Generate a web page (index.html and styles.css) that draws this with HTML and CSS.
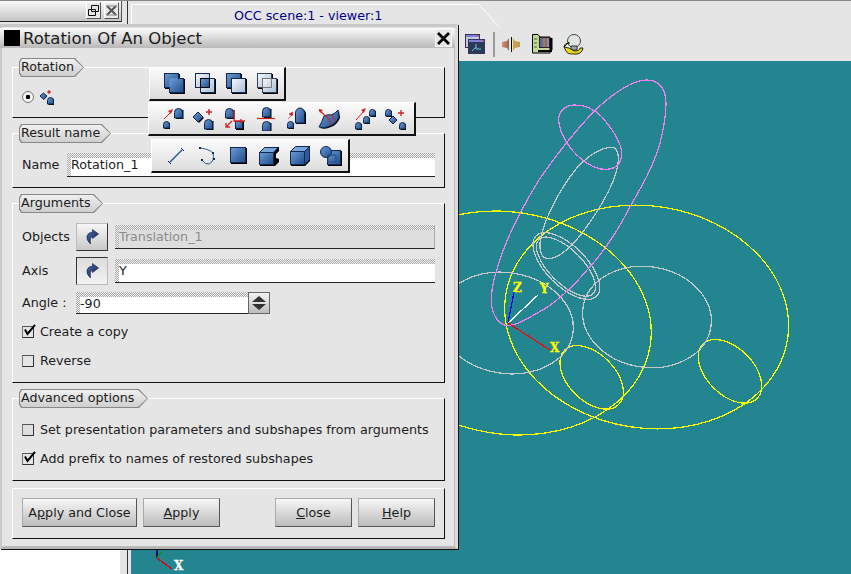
FILE: index.html
```html
<!DOCTYPE html>
<html lang="en">
<head>
  <meta charset="UTF-8" />
  <title>Rotation Of An Object</title>
  <link rel="stylesheet" href="styles.css">
</head>
<body>

  <svg class="defs" width="0" height="0">
    <defs>
      <linearGradient id="bl" x1="0" y1="0" x2="1" y2="1">
        <stop offset="0" stop-color="#6f9cd4"/>
        <stop offset="1" stop-color="#1d4c8c"/>
      </linearGradient>
      <linearGradient id="pl" x1="0" y1="0" x2="1" y2="1">
        <stop offset="0" stop-color="#f6f9fe"/>
        <stop offset="1" stop-color="#a8bad2"/>
      </linearGradient>
      <linearGradient id="arrow" x1="0" y1="0" x2="1" y2="1">
        <stop offset="0" stop-color="#4f6fb5"/>
        <stop offset="1" stop-color="#0c1c44"/>
      </linearGradient>
      <linearGradient id="splitl" x1="0" y1="0" x2="1" y2="0">
        <stop offset="0" stop-color="#e08a70"/>
        <stop offset="1" stop-color="#8a6a50"/>
      </linearGradient>
      <linearGradient id="splitr" x1="0" y1="0" x2="1" y2="0">
        <stop offset="0" stop-color="#e0a040"/>
        <stop offset="1" stop-color="#a8a060"/>
      </linearGradient>
      <g id="dome">
        <path d="M2 2h7.500v9H2z" fill="#000"/>
        <path d="M.5 10V4.500Q.5 .5 4.500 .5T8.500 4.500V10Z" fill="url(#bl)" stroke="#0e2546"/>
      </g>
      <g id="smalldome">
        <path d="M1.500 2h5.500v6H1.500z" fill="#000"/>
        <path d="M.5 7V3.500Q.5 .5 3.500 .5T6.500 3.500V7Z" fill="url(#bl)" stroke="#0e2546"/>
      </g>
      <g id="turn">
        <path d="M6.500 .5L12.500 5L6.500 9.500V7Q3.500 8 4.500 15Q0 11 1 7Q2 3.500 6.500 3Z" fill="url(#arrow)" stroke="#0c1c44" stroke-width=".6"/>
      </g>
      <path id="tick" d="M3 5.500L5.500 10L13 .8" fill="none" stroke="#000" stroke-width="2"/>
    </defs>
  </svg>

  <div class="app">
    <div class="side">
      <div class="side-title">
        <span class="win-btn">
          <svg width="13" height="13" viewBox="0 0 13 13"><path d="M4.500 1.500h7v6h-7zM1.500 5.500h7v6h-7z" fill="#e5e5e5" stroke="#111"/></svg>
        </span>
        <span class="win-btn">
          <svg width="13" height="13" viewBox="0 0 13 13"><path d="M2 2L11 11M11 2L2 11" stroke="#555" stroke-width="2"/><path d="M1 2h11M1 11h11" stroke="#888"/></svg>
        </span>
      </div>
      <div class="side-rest"></div>
    </div>

    <div class="main">
      <div class="tabs">
        <div class="tab">OCC scene:1 - viewer:1</div>
        <svg class="tab-end" width="22" height="27" viewBox="0 0 22 27"><path d="M0 3.500H1L21 26" fill="none" stroke="#fff"/></svg>
      </div>

      <div class="toolbar">
        <svg class="tool-win" width="20" height="20" viewBox="0 0 20 20">
          <rect x=".5" y=".5" width="14" height="13" fill="#c5c5de" stroke="#34345c"/>
          <path d="M1 1h13v2H1z" fill="#8080d8"/>
          <rect x="3.500" y="5.500" width="16" height="14" fill="#2c3a58" stroke="#34345c"/>
          <path d="M4 6h15v2H4z" fill="#8080d8"/>
          <path d="M17 6h2v1h-2zM12 1h2v1h-2z" fill="#e04040"/>
          <path d="M7 17L11 13M11 10V15H16" stroke="#63c5d8" fill="none"/>
        </svg>
        <span class="tool-sep"></span>
        <svg class="tool-split" width="18" height="15" viewBox="0 0 18 15">
          <path d="M0 5L5 4L7 1V14L5 11L0 10Z" fill="url(#splitl)"/>
          <path d="M11 1L13 4L18 5V10L13 11L11 14Z" fill="url(#splitr)"/>
          <path d="M9.500 0V15" stroke="#000"/>
        </svg>
        <svg class="tool-chart" width="21" height="20" viewBox="0 0 21 20">
          <path d="M.5 .5H6L8 3H18V19H.5Z" fill="#c0d890" stroke="#000"/>
          <path d="M2 5h3M2 9h3M2 13h3M8 16v2M12 16v2" stroke="#4a6a20"/>
          <rect x="7" y="3" width="11" height="11" fill="#222"/>
          <path d="M8 4h3v9H8z" fill="#7a5aa0"/><path d="M11 4h2v9h-2z" fill="#5aa060"/><path d="M13 4h2v9h-2z" fill="#c05060"/><path d="M15 4h2v9h-2z" fill="#8090b0"/>
          <path d="M18 4h2.500v12H18zM6 16h14v2H6z" fill="#000"/>
        </svg>
        <svg class="tool-bulb" width="21" height="21" viewBox="0 0 21 21">
          <circle cx="11" cy="7" r="6.500" fill="#dfe6e2" stroke="#444"/>
          <path d="M8 12h6v4H8z" fill="#9aa" stroke="#333"/>
          <path d="M1 13Q2 8 6 10V8L1 13ZM1 13L3 17Q4 20 10 20Q19 21 20 14L17 14Q17 17 11 17L6 14Z" fill="#e8d820" stroke="#000" stroke-width=".8"/>
        </svg>
      </div>

      <div class="viewer">
        <svg class="scene" viewBox="131 61 720 513" width="720" height="513">
          <g transform="translate(460 70) scale(.33333)" fill="none" class="wires">
            <g stroke="#ffff00">
              <ellipse cx="141" cy="759" rx="435" ry="333" transform="rotate(9 141 759)"/>
              <ellipse cx="560" cy="741" rx="428" ry="333" transform="rotate(9 560 741)"/>
              <ellipse cx="395" cy="922" rx="115" ry="70" transform="rotate(45 395 922)"/>
              <ellipse cx="810" cy="904" rx="115" ry="70" transform="rotate(45 810 904)"/>
            </g>
            <g stroke="#c8c8c8">
              <ellipse cx="138" cy="759" rx="203" ry="151" transform="rotate(9 138 759)"/>
              <ellipse cx="561" cy="741" rx="194" ry="151" transform="rotate(9 561 741)"/>
              <ellipse cx="319" cy="588" rx="128" ry="60" transform="rotate(45 319 588)"/>
              <ellipse cx="318" cy="590" rx="115" ry="50" transform="rotate(45 318 590)"/>
              <path d="M455 232C470 232 476 250 475 270C473 310 450 360 420 410C395 450 365 495 335 525C310 550 285 566 265 566C245 566 238 545 240 520C245 470 280 400 310 350C335 310 365 275 390 258C415 240 435 232 455 232Z"/>
            </g>
            <g stroke="#ee82ee">
              <path d="M135 766C105 755 94 720 94 690C94 640 110 600 130 540C160 460 200 390 240 325C300 240 380 140 440 90C490 50 530 30 560 30C600 30 618 60 618 100C618 140 610 180 600 220C580 290 545 350 510 410C480 470 435 540 390 590C340 650 280 705 230 730C195 750 165 770 135 766Z"/>
              <path d="M345 105C315 105 295 125 296 150C297 190 330 240 365 268C390 288 415 300 440 298C470 296 485 280 485 250C485 215 455 175 425 140C400 115 375 105 345 105Z"/>
            </g>
          </g>
          <g class="wires">
            <path d="M508 323L514 292" stroke="#0000ff"/>
            <path d="M514 292L514 291" stroke="#c8c8c8" stroke-width="3"/>
            <path d="M508 323L538 295" stroke="#ffffff"/>
            <path d="M508 323L550 350" stroke="#ff0000"/>
            <path d="M157 558L157 550" stroke="#00007a"/>
            <path d="M157 558L162 551" stroke="#00a000"/>
            <path d="M157 558L172 569" stroke="#e00000" stroke-width="2"/>
          </g>
          <text class="axis" x="513" y="292">Z</text>
          <text class="axis" x="540" y="293">Y</text>
          <text class="axis" x="550" y="352">X</text>
          <text class="axis axis-white" x="174" y="570">X</text>
        </svg>
      </div>
    </div>
  </div>

  <div class="dialog">
    <div class="dlg-title">
      <span class="dlg-icon"></span>
      <span class="dlg-name">Rotation Of An Object</span>
      <span class="dlg-close">
        <svg width="13" height="13" viewBox="0 0 13 13"><path d="M1 1L12 12M12 1L1 12" stroke="#000" stroke-width="2.800"/></svg>
      </span>
    </div>

    <div class="dlg-body">
      <div class="group group-rotation">
        <div class="legend legend-rotation"><span>Rotation</span></div>
        <div class="row">
          <span class="radio"></span>
          <svg class="radio-icon" width="16" height="16" viewBox="0 0 16 16">
            <path d="M1 7L4.500 4L8 7L5 10.500Z" fill="url(#bl)" stroke="#0e2546"/>
            <use href="#smalldome" x="8" y="8"/>
            <path d="M10 1v4M8 3h4" stroke="#c00000"/>
          </svg>
        </div>
      </div>

      <div class="group group-name">
        <div class="legend legend-result"><span>Result name</span></div>
        <div class="row">
          <span class="lbl lbl-name">Name</span>
          <div class="field"><div class="field-in">Rotation_1</div></div>
        </div>
      </div>

      <div class="group group-args">
        <div class="legend legend-args"><span>Arguments</span></div>
        <div class="row row-pick">
          <span class="lbl lbl-arg">Objects</span>
          <span class="pick"><svg width="13" height="16" viewBox="0 0 13 16"><use href="#turn"/></svg></span>
          <div class="field field-off"><div class="field-in">Translation_1</div></div>
        </div>
        <div class="row row-pick row-axis">
          <span class="lbl lbl-arg">Axis</span>
          <span class="pick pick-down"><svg width="13" height="16" viewBox="0 0 13 16"><use href="#turn"/></svg></span>
          <div class="field"><div class="field-in">Y</div></div>
        </div>
        <div class="row row-angle">
          <span class="lbl lbl-arg">Angle :</span>
          <div class="field field-spin"><div class="field-in">-90</div></div>
          <span class="spin">
            <svg width="20" height="20" viewBox="0 0 20 20"><path d="M10 3L17 9H3ZM3 11H17L10 17Z" fill="#333"/><path d="M2 10H18" stroke="#e5e5e5"/></svg>
          </span>
        </div>
        <div class="row row-check row-check-first">
          <span class="check"><svg width="16" height="16" viewBox="0 0 16 16"><use href="#tick" y="0"/></svg></span>
          <span class="lbl">Create a copy</span>
        </div>
        <div class="row row-check">
          <span class="check"></span>
          <span class="lbl">Reverse</span>
        </div>
      </div>

      <div class="group group-adv">
        <div class="legend legend-adv"><span>Advanced options</span></div>
        <div class="row row-check row-check-adv">
          <span class="check check-off"></span>
          <span class="lbl">Set presentation parameters and subshapes from arguments</span>
        </div>
        <div class="row row-check">
          <span class="check"><svg width="16" height="16" viewBox="0 0 16 16"><use href="#tick"/></svg></span>
          <span class="lbl">Add prefix to names of restored subshapes</span>
        </div>
      </div>

      <div class="group group-btns">
        <button class="btn btn-wide">A<u>p</u>ply and Close</button>
        <button class="btn"><u>A</u>pply</button>
        <span class="spacer"></span>
        <button class="btn"><u>C</u>lose</button>
        <button class="btn"><u>H</u>elp</button>
      </div>
    </div>
  </div>

  <!-- floating toolbars sitting over the dialog -->
  <div class="float float-a">
    <span class="grip"></span>
    <svg class="ico" viewBox="0 0 24 24">
      <rect x="3" y="2" width="15" height="15" fill="#000"/><rect x="8" y="7" width="15" height="15" fill="#000"/>
      <rect x="2.500" y="1.500" width="14" height="14" fill="url(#bl)" stroke="#10294e"/>
      <rect x="7.500" y="6.500" width="14" height="14" fill="url(#bl)" stroke="#10294e"/>
      <path d="M7.500 15V6.500H16" stroke="#5d8cc8" fill="none"/>
    </svg>
    <svg class="ico" viewBox="0 0 24 24">
      <rect x="8" y="7" width="15" height="15" fill="#000"/>
      <rect x="2.500" y="1.500" width="14" height="14" fill="url(#pl)" stroke="#10294e"/>
      <rect x="7.500" y="6.500" width="14" height="14" fill="url(#pl)" stroke="#10294e"/>
      <rect x="7.500" y="6.500" width="9" height="9" fill="url(#bl)" stroke="#000"/>
    </svg>
    <svg class="ico" viewBox="0 0 24 24">
      <rect x="3" y="2" width="15" height="15" fill="#000"/><rect x="8" y="7" width="15" height="15" fill="#000"/>
      <rect x="2.500" y="1.500" width="14" height="14" fill="url(#bl)" stroke="#10294e"/>
      <rect x="7.500" y="6.500" width="14" height="14" fill="url(#pl)" stroke="#10294e"/>
    </svg>
    <svg class="ico" viewBox="0 0 24 24">
      <rect x="3" y="2" width="15" height="15" fill="#000"/><rect x="8" y="7" width="15" height="15" fill="#000"/>
      <rect x="2.500" y="1.500" width="14" height="14" fill="url(#pl)" stroke="#2f3f55"/>
      <rect x="7.500" y="6.500" width="14" height="14" fill="url(#pl)" stroke="#2f3f55"/>
      <path d="M7.500 15.500V6.500H16.500V15.500Z" fill="none" stroke="#777"/>
    </svg>
  </div>

  <div class="float float-b">
    <span class="grip"></span>
    <svg class="ico" viewBox="0 0 24 24">
      <use href="#smalldome" x="2" y="14"/><use href="#dome" x="13" y="1"/>
      <path d="M3 12L10 5" stroke="#d02020"/><path d="M12 2L7 4L10 7Z" fill="#d02020"/>
    </svg>
    <svg class="ico" viewBox="0 0 24 24">
      <path d="M2 11L7 6L12 11L7 16Z" fill="#000"/>
      <path d="M1 10L6 5L11 10L6 15Z" fill="url(#bl)" stroke="#0e2546"/>
      <use href="#dome" x="12" y="12"/>
      <path d="M17 2v6M14 5h6" stroke="#d02020" stroke-width="1.400"/>
    </svg>
    <svg class="ico" viewBox="0 0 24 24">
      <use href="#dome" x="2" y="1"/>
      <rect x="13" y="15" width="8" height="8" fill="#000"/>
      <rect x="12.500" y="14.500" width="7" height="7" fill="url(#bl)" stroke="#0e2546"/>
      <path d="M11 3V14H22M18 12v4M9 14L4 19M7 20H3V16" stroke="#d02020" fill="none" stroke-width="1.300"/>
    </svg>
    <svg class="ico" viewBox="0 0 24 24">
      <use href="#dome" x="8" y="0"/><use href="#dome" x="8" y="14"/>
      <path d="M3 11.500H21" stroke="#d02020" stroke-width="1.200"/>
    </svg>
    <svg class="ico" viewBox="0 0 24 24">
      <use href="#smalldome" x="2" y="14"/>
      <path d="M11 17V7a5 5 0 0 1 10 0v10z" fill="#000"/>
      <path d="M10.500 16V6a4.500 5 0 0 1 9 0v10z" fill="url(#bl)" stroke="#0e2546"/>
      <path d="M3 12L8 7M8 5L4 7L7 9Z" stroke="#d02020" fill="#d02020" stroke-width=".6"/>
    </svg>
    <svg class="ico" viewBox="0 0 24 24">
      <path d="M9 10Q13 8 16 9Q20 8 23 4L24 11Q21 18 15 20Q9 23 4 21Q7 16 9 10Z" fill="#000"/>
      <path d="M8 9Q12 7 15 8Q19 7 22 3L23 10Q20 17 14 19Q8 22 3 20Q6 15 8 9Z" fill="url(#bl)" stroke="#0e2546"/>
      <path d="M3 3L13 12L15 18M15 7L19 14" stroke="#d02020" fill="none" stroke-width="1.100"/>
      <path d="M3 2L7 3L4 6Z" fill="#d02020"/>
    </svg>
    <span class="float-sep"></span>
    <svg class="ico" viewBox="0 0 24 24">
      <use href="#smalldome" x="2" y="15"/><use href="#smalldome" x="10" y="9"/><use href="#smalldome" x="16" y="2"/>
      <path d="M3 13L11 4" stroke="#d02020"/><path d="M13 1L8 3L11 6Z" fill="#d02020"/>
    </svg>
    <svg class="ico" viewBox="0 0 24 24">
      <use href="#smalldome" x="1" y="2"/>
      <path d="M5 13L9 9L13 13L9 17Z" fill="url(#bl)" stroke="#0e2546"/>
      <use href="#smalldome" x="15" y="15"/>
      <path d="M17 3v6M14 6h6" stroke="#d02020" stroke-width="1.300"/>
    </svg>
  </div>

  <div class="float float-c">
    <span class="grip"></span>
    <svg class="ico" viewBox="0 0 24 24">
      <path d="M6 18L18 6" stroke="#2a5a9a" stroke-width="1.500"/>
      <path d="M4 17L7 20M17 4L20 7" stroke="#10294e"/>
    </svg>
    <svg class="ico" viewBox="0 0 24 24">
      <path d="M5 4Q14 5 18 9Q20 17 14 20Q10 21 7 16" fill="none" stroke="#2a5a9a"/>
      <path d="M4 3h2v2H4zM17 8h2v2h-2zM18 14h2v2h-2zM6 15h2v2H6z" fill="#10294e"/>
    </svg>
    <svg class="ico" viewBox="0 0 24 24">
      <rect x="5" y="4" width="16" height="16" fill="#000"/>
      <rect x="4.500" y="3.500" width="15" height="15" fill="url(#bl)" stroke="#10294e"/>
    </svg>
    <svg class="ico" viewBox="0 0 24 24">
      <path d="M2 9L8 3H22V7L19 10V14L22 15V18L18 22H3Z" fill="#000"/>
      <path d="M2.500 8.500H16.500V20.500H2.500Z" fill="url(#bl)" stroke="#10294e"/>
      <path d="M2.500 8.500L7.500 3.500H21L16.500 8.500Z" fill="#7ba6dc" stroke="#10294e"/>
    </svg>
    <svg class="ico" viewBox="0 0 24 24">
      <path d="M3 8L8 3H22V17L17 22H3Z" fill="#000"/>
      <path d="M2.500 7.500H16.500V20.500H2.500Z" fill="url(#bl)" stroke="#10294e"/>
      <path d="M2.500 7.500L7.500 2.500H21.500L16.500 7.500Z" fill="#7ba6dc" stroke="#10294e"/>
      <path d="M16.500 7.500L21.500 2.500V15.500L16.500 20.500Z" fill="#2a5a9a" stroke="#10294e"/>
    </svg>
    <svg class="ico" viewBox="0 0 24 24">
      <rect x="9" y="7" width="14" height="15" fill="#000"/>
      <rect x="8.500" y="6.500" width="13" height="14" fill="url(#bl)" stroke="#10294e"/>
      <circle cx="7" cy="8" r="5.500" fill="url(#bl)" stroke="#10294e"/>
      <path d="M9 11h8v7H9z" fill="none" stroke="#274a7d"/>
    </svg>
  </div>

</body>
</html>
```

FILE: styles.css
```css
* {
  box-sizing: border-box;
}
html, body {
  margin: 0;
  height: 100%;
  overflow: hidden;
}
body {
  position: relative;
  width: 851px;
  height: 574px;
  font-family: "DejaVu Sans", sans-serif;
  font-size: 12.7px;
  color: #1c1c1c;
  background: #e5e5e5;
}
.defs {
  position: absolute;
}

/* app behind the dialog */
.app {
  display: flex;
  height: 574px;
  border-top: 1px solid #888;
}
.side {
  width: 128px;
  display: flex;
  flex-direction: column;
  border-right: 1px solid #333;
}
.side-title {
  height: 21px;
  width: 122px;
  padding: 1px 2px 0 0;
  display: flex;
  justify-content: flex-end;
  gap: 3px;
  background: linear-gradient(#fafafa, #c4c4c4);
  border-bottom: 1px solid #222;
  border-right: 1px solid #555;
}
.win-btn {
  width: 15px;
  height: 17px;
  display: flex;
  align-items: center;
  justify-content: center;
  background: #e8e8e8;
  border: 1px solid;
  border-color: #fff #555 #555 #fff;
}
.side-rest {
  flex: 1;
  border-right: 7px solid #e5e5e5;
  background: #fff;
  margin-top: 2px;
}
.main {
  flex: 1;
  display: flex;
  flex-direction: column;
}
.tabs {
  height: 26px;
  padding-left: 3px;
  display: flex;
}
.tab {
  width: 347px;
  height: 26px;
  margin-top: 3px;
  padding-left: 102px;
  line-height: 22px;
  color: #000087;
  border-top: 1px solid #fff;
  border-left: 1px solid #fff;
}
.tab-end {
  flex: none;
}
.toolbar {
  height: 34px;
  padding-left: 337px;
  display: flex;
  align-items: center;
}
.tool-win {
  margin-right: 8px;
}
.tool-sep {
  width: 2px;
  height: 25px;
  margin-right: 7px;
  background: #999;
}
.tool-split {
  margin-right: 12px;
}
.tool-chart {
  margin-right: 10px;
}
.viewer {
  flex: 1;
  margin-left: 3px;
  background: #23858f;
  overflow: hidden;
}
.scene {
  display: block;
}
.wires * {
  vector-effect: non-scaling-stroke;
  shape-rendering: crispEdges;
  stroke-width: 1.25;
}
.axis {
  font-family: "DejaVu Serif", serif;
  font-weight: bold;
  font-size: 12px;
  fill: #ffff00;
  stroke: #ffff00;
  stroke-width: .3;
}
.axis-white {
  fill: #fff;
  stroke: #fff;
}

/* dialog window */
.dialog {
  position: absolute;
  left: 0;
  top: 24px;
  width: 458px;
  height: 525px;
  background: #e5e5e5;
  border: 3px solid #c9c9c9;
  border-left-width: 2px;
  border-right: 3px solid #dcdcdc;
  border-bottom: 2px solid #b5b5b5;
  box-shadow: inset -1px -1px 0 #bbb, 1px 1px 0 #111;
}
.dlg-title {
  height: 20px;
  margin: 1px 0 0 -2px;
  padding: 0 3px 0 4px;
  display: flex;
  align-items: center;
  background: linear-gradient(#fbfbfb, #b9b9b9);
}
.dlg-icon {
  width: 16px;
  height: 16px;
  background: #000;
}
.dlg-name {
  flex: 1;
  margin-left: 3px;
  font-size: 16.5px;
}
.dlg-close {
  width: 17px;
  height: 18px;
  display: flex;
  align-items: center;
  justify-content: center;
  background: #e5e5e5;
  border: 1px solid #f4f4f4;
}
.dlg-body {
  width: 433px;
  margin: 0 0 0 10px;
  display: flex;
  flex-direction: column;
}
.group {
  width: 433px;
  border: 1px solid;
  border-color: #fff #111 #111 #fff;
}
.group-rotation { margin-top: 19px; height: 51px; }
.group-name { margin-top: 15px; height: 55px; }
.group-args { margin-top: 15px; height: 180px; }
.group-adv { margin-top: 15px; height: 83px; }
.group-btns {
  margin-top: 7px;
  height: 51px;
  padding: 9px;
  display: flex;
  gap: 6px;
}
.legend {
  height: 19px;
  margin: -10px 0 0 6px;
  padding: 1px;
  background: #888;
  clip-path: polygon(2px 0, calc(100% - 9px) 0, 100% 50%, calc(100% - 9px) 100%, 2px 100%, 0 80%, 0 20%);
}
.legend span {
  display: block;
  height: 17px;
  padding-left: 1px;
  line-height: 16px;
  white-space: nowrap;
  background: linear-gradient(#f0f0f0, #cfcfcf);
  clip-path: polygon(2px 0, calc(100% - 9px) 0, 100% 50%, calc(100% - 9px) 100%, 2px 100%, 0 80%, 0 20%);
}
.legend-rotation { width: 65px; }
.legend-result { width: 92px; }
.legend-args { width: 84px; }
.legend-adv { width: 129px; }

.row {
  display: flex;
  align-items: center;
  padding-left: 9px;
  padding-right: 9px;
}
.group-rotation .row { margin-top: 12px; }
.group-name .row { margin-top: 10px; height: 24px; }
.lbl {
  margin-top: -2px;
}
.lbl-name { width: 45px; }
.lbl-arg { width: 54px; }
.group-args .legend { margin-bottom: 10px; }
.row-pick { height: 28px; }
.row-axis { margin-top: 6px; }
.row-angle { height: 22px; margin-top: 7px; }
.row-check { height: 18px; margin-top: 11px; gap: 5px; }
.row-check-first { margin-top: 9px; }
.row-check-adv { margin-top: 13px; }
.row-check .lbl { margin-left: 1px; }

.radio {
  width: 12px;
  height: 12px;
  border-radius: 50%;
  border: 1px solid #777;
  background: radial-gradient(#000 0 2px, #f4f4f4 2.5px);
}
.radio-icon {
  margin-left: 5px;
}
.field {
  flex: 1;
  height: 24px;
  padding: 5px 0 0 4px;
  display: flex;
  background: repeating-conic-gradient(#a9a9a9 0 25%, #f2f2f2 0 50%) 0 0 / 2px 2px;
  border-bottom: 1px solid #222;
}
.field-in {
  flex: 1;
  line-height: 13px;
  background: #fff;
  white-space: nowrap;
}
.field-off {
  border-right: 1px solid #aaa;
}
.field-off .field-in {
  background: #dedede;
  color: #8c8c8c;
}
.field-spin {
  flex: none;
  width: 172px;
  height: 22px;
}
.spin {
  width: 22px;
  height: 22px;
  display: flex;
  align-items: center;
  justify-content: center;
  background: linear-gradient(#f2f2f2, #bdbdbd);
  border: 1px solid #666;
}
.pick {
  flex: none;
  width: 32px;
  height: 28px;
  margin-right: 7px;
  display: flex;
  align-items: center;
  justify-content: center;
  background: linear-gradient(#f6f6f6, #c8c8c8);
  border: 1px solid;
  border-color: #bbb #333 #333 #bbb;
}
.pick-down {
  background: linear-gradient(#dcdcdc, #f2f2f2);
  border-color: #333 #bbb #bbb #333;
}
.check {
  position: relative;
  width: 12px;
  height: 12px;
  flex: none;
  background: #e5e5e5;
  border: 1px solid #333;
  border-top-color: #555;
  border-left-color: #777;
}
.check svg {
  position: absolute;
  left: -1px;
  top: -3px;
}
.check-off {
  background: #dedede;
}
.btn {
  width: 77px;
  height: 29px;
  padding: 0;
  font: inherit;
  color: #1c1c1c;
  background: linear-gradient(#f7f7f7, #bcbcbc);
  border: 1px solid;
  border-color: #aaa #555 #555 #aaa;
}
.btn-wide {
  width: 115px;
}
.spacer {
  flex: 1;
}

/* floating toolbars */
.float {
  position: absolute;
  display: flex;
  align-items: center;
  height: 34px;
  background: linear-gradient(#fbfbfb, #dcdcdc);
  border: 1px solid;
  border-color: #fff #111 #111 #fff;
  border-width: 1px 2px 2px 1px;
}
.float-a { left: 149px; top: 67px; width: 137px; }
.float-b { left: 148px; top: 102px; width: 268px; }
.float-c { left: 151px; top: 139px; width: 199px; }
.grip {
  width: 6px;
  height: 25px;
  margin: 0 9px 0 3px;
  background: repeating-conic-gradient(#9c9c9c 0 25%, #eee 0 50%) 0 0 / 2px 2px;
}
.float .ico {
  width: 24px;
  height: 24px;
  margin-right: 7px;
  flex: none;
}
.float-sep {
  width: 2px;
  height: 25px;
  margin: 0 5px 0 1px;
  background: #999;
}
```
